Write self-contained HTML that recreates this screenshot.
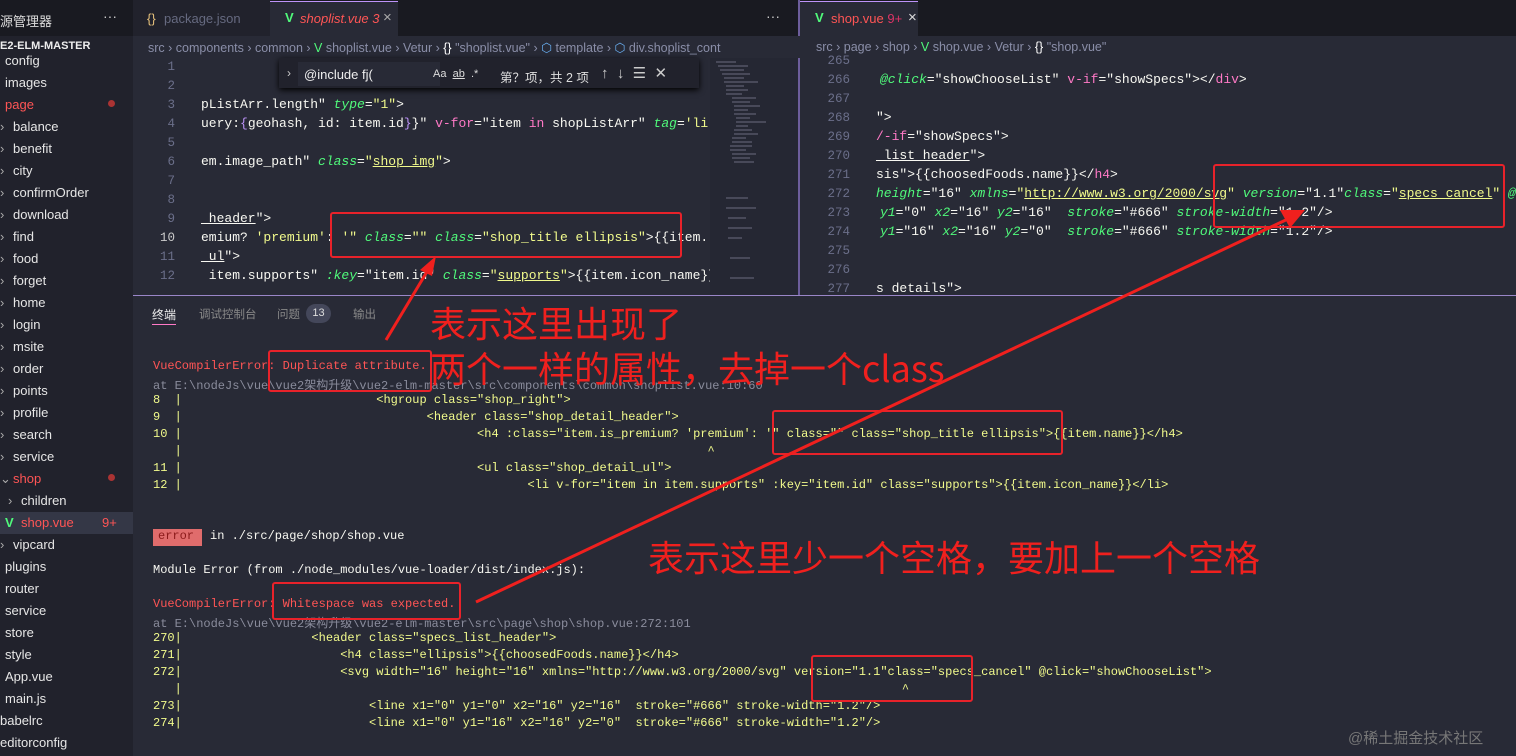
<!DOCTYPE html>
<html><head><meta charset="utf-8"><style>
*{margin:0;padding:0;box-sizing:border-box}
body{width:1516px;height:756px;overflow:hidden;background:#282a36;font-family:"Liberation Sans","Noto Sans CJK SC",sans-serif;position:relative;color:#f8f8f2}
.a{position:absolute;white-space:pre}
.sb{position:absolute;left:0;top:0;width:133px;height:756px;background:#21222c}
.si{position:absolute;font-size:13px;color:#e6e6e6;white-space:pre}
.ln{position:absolute;font-family:"Liberation Mono",monospace;font-size:12.5px;color:#6b6f8a;text-align:right;width:40px}
.cd{position:absolute;font-family:"Liberation Mono",monospace;font-size:13px;white-space:pre;color:#f8f8f2}
.g{color:#50fa7b;font-style:italic}.y{color:#f1fa8c}.p{color:#ff79c6}.pu{color:#bd93f9}
.t{position:absolute;font-family:"Liberation Mono","Noto Sans CJK SC",monospace;font-size:12px;white-space:pre;color:#f1fa8c}
.r{color:#ff5555}.gr{color:#8a8c9c}.w{color:#f8f8f2}
.box{position:absolute;border:2px solid #e8222a;border-radius:3px}
.ann{position:absolute;color:#f0201e;font-size:36px;white-space:pre;font-family:"Noto Sans CJK SC",sans-serif;line-height:44px}
</style></head><body>
<div class="a" style="left:0;top:0;width:1516px;height:36px;background:#191a21"></div>
<div class="a" style="left:133px;top:0;width:137px;height:36px;background:#21222c"></div>
<div class="a" style="left:270px;top:1px;width:128px;height:35px;background:#282a36;border-top:1px solid #bd93f9"></div>
<div class="a" style="left:800px;top:1px;width:118px;height:35px;background:#282a36;border-top:1px solid #bd93f9"></div>
<div class="a" style="left:0;top:11px;font-size:13px;color:#ddd">源管理器</div>
<div class="a" style="left:103px;top:8px;font-size:14px;color:#ccc">···</div>
<div class="a" style="left:147px;top:11px;font-size:13px;color:#e5c07b">{}</div>
<div class="a" style="left:164px;top:11px;font-size:13px;color:#666a80">package.json</div>
<div class="a" style="left:285px;top:10px;font-size:13px;color:#50fa7b;font-weight:bold">V</div>
<div class="a" style="left:300px;top:11px;font-size:13px;color:#ff5555;font-style:italic">shoplist.vue 3</div>
<div class="a" style="left:383px;top:9px;font-size:15px;color:#aaa">×</div>
<div class="a" style="left:766px;top:8px;font-size:14px;color:#ccc">···</div>
<div class="a" style="left:798px;top:0;width:2px;height:296px;background:#6d5e9c"></div>
<div class="a" style="left:815px;top:10px;font-size:13px;color:#50fa7b;font-weight:bold">V</div>
<div class="a" style="left:831px;top:11px;font-size:13px;color:#ff5555">shop.vue <span style="color:#d36">9+</span></div>
<div class="a" style="left:908px;top:9px;font-size:15px;color:#ddd">×</div>
<div class="a" style="left:133px;top:36px;width:1383px;height:22px;background:#282a36"></div>
<div class="a" style="left:148px;top:40px;font-size:12.5px;color:#8a8ea8">src › components › common › <span style="color:#50fa7b">V</span> shoplist.vue › Vetur › <span style="color:#fff">{}</span> "shoplist.vue" › <span style="color:#6ab0f3">⬡</span> template › <span style="color:#6ab0f3">⬡</span> div.shoplist_cont</div>
<div class="a" style="left:800px;top:36px;width:716px;height:22px;background:#282a36"></div>
<div class="a" style="left:816px;top:40px;font-size:12.5px;color:#8a8ea8">src › page › shop › <span style="color:#50fa7b">V</span> shop.vue › Vetur › <span style="color:#fff">{}</span> "shop.vue"</div>
<div class="sb" style="top:36px;height:720px"></div>
<div class="a" style="left:0;top:40px;font-size:11px;font-weight:bold;color:#eee">E2-ELM-MASTER</div>
<div class="a" style="left:0;top:512px;width:133px;height:22px;background:#343746"></div>
<div class="si" style="left:5px;top:53px">config</div>
<div class="si" style="left:5px;top:75px">images</div>
<div class="si" style="left:5px;top:97px;color:#ff5555">page</div>
<div class="a" style="left:108px;top:100px;width:7px;height:7px;border-radius:50%;background:#a33"></div>
<div class="si" style="left:0;top:119px;color:#aaa">›</div><div class="si" style="left:13px;top:119px">balance</div>
<div class="si" style="left:0;top:141px;color:#aaa">›</div><div class="si" style="left:13px;top:141px">benefit</div>
<div class="si" style="left:0;top:163px;color:#aaa">›</div><div class="si" style="left:13px;top:163px">city</div>
<div class="si" style="left:0;top:185px;color:#aaa">›</div><div class="si" style="left:13px;top:185px">confirmOrder</div>
<div class="si" style="left:0;top:207px;color:#aaa">›</div><div class="si" style="left:13px;top:207px">download</div>
<div class="si" style="left:0;top:229px;color:#aaa">›</div><div class="si" style="left:13px;top:229px">find</div>
<div class="si" style="left:0;top:251px;color:#aaa">›</div><div class="si" style="left:13px;top:251px">food</div>
<div class="si" style="left:0;top:273px;color:#aaa">›</div><div class="si" style="left:13px;top:273px">forget</div>
<div class="si" style="left:0;top:295px;color:#aaa">›</div><div class="si" style="left:13px;top:295px">home</div>
<div class="si" style="left:0;top:317px;color:#aaa">›</div><div class="si" style="left:13px;top:317px">login</div>
<div class="si" style="left:0;top:339px;color:#aaa">›</div><div class="si" style="left:13px;top:339px">msite</div>
<div class="si" style="left:0;top:361px;color:#aaa">›</div><div class="si" style="left:13px;top:361px">order</div>
<div class="si" style="left:0;top:383px;color:#aaa">›</div><div class="si" style="left:13px;top:383px">points</div>
<div class="si" style="left:0;top:405px;color:#aaa">›</div><div class="si" style="left:13px;top:405px">profile</div>
<div class="si" style="left:0;top:427px;color:#aaa">›</div><div class="si" style="left:13px;top:427px">search</div>
<div class="si" style="left:0;top:449px;color:#aaa">›</div><div class="si" style="left:13px;top:449px">service</div>
<div class="si" style="left:0;top:471px;color:#aaa">⌄</div><div class="si" style="left:13px;top:471px;color:#ff5555">shop</div>
<div class="a" style="left:108px;top:474px;width:7px;height:7px;border-radius:50%;background:#a33"></div>
<div class="si" style="left:8px;top:493px;color:#aaa">›</div><div class="si" style="left:21px;top:493px">children</div>
<div class="si" style="left:5px;top:515px;color:#50fa7b;font-weight:bold">V</div><div class="si" style="left:21px;top:515px;color:#ff5555">shop.vue</div><div class="si" style="left:102px;top:515px;color:#ff5555">9+</div>
<div class="si" style="left:0;top:537px;color:#aaa">›</div><div class="si" style="left:13px;top:537px">vipcard</div>
<div class="si" style="left:5px;top:559px">plugins</div>
<div class="si" style="left:5px;top:581px">router</div>
<div class="si" style="left:5px;top:603px">service</div>
<div class="si" style="left:5px;top:625px">store</div>
<div class="si" style="left:5px;top:647px">style</div>
<div class="si" style="left:5px;top:669px">App.vue</div>
<div class="si" style="left:5px;top:691px">main.js</div>
<div class="si" style="left:0;top:713px">babelrc</div>
<div class="si" style="left:0;top:735px">editorconfig</div>
<div class="ln" style="left:135px;top:60px">1</div>
<div class="ln" style="left:135px;top:79px">2</div>
<div class="ln" style="left:135px;top:98px">3</div>
<div class="ln" style="left:135px;top:117px">4</div>
<div class="ln" style="left:135px;top:136px">5</div>
<div class="ln" style="left:135px;top:155px">6</div>
<div class="ln" style="left:135px;top:174px">7</div>
<div class="ln" style="left:135px;top:193px">8</div>
<div class="ln" style="left:135px;top:212px">9</div>
<div class="ln" style="left:135px;top:231px;color:#ccc">10</div>
<div class="ln" style="left:135px;top:250px">11</div>
<div class="ln" style="left:135px;top:269px">12</div>
<div class="cd" style="left:201px;top:97px">pListArr.length" <span class="g">type</span>=<span class="y">"1"</span>&gt;</div>
<div class="cd" style="left:201px;top:116px">uery:<span class="pu">{</span>geohash, id: item.id<span class="pu">}</span>}" <span class="p">v-for</span>="item <span class="p">in</span> shopListArr" <span class="g">tag</span>=<span class="y">'li'</span></div>
<div class="cd" style="left:201px;top:154px">em.image_path" <span class="g">class</span>=<span class="y">"<u>shop_img</u>"</span>&gt;</div>
<div class="cd" style="left:201px;top:211px"><u>_header</u>"&gt;</div>
<div class="cd" style="left:201px;top:230px">emium? <span class="y">'premium'</span>: <span class="y">'"</span> <span class="g">class</span>=<span class="y">""</span> <span class="g">class</span>=<span class="y">"shop_title ellipsis"</span>&gt;{{item.</div>
<div class="cd" style="left:201px;top:249px"><u>_ul</u>"&gt;</div>
<div class="cd" style="left:201px;top:268px"> item.supports" <span class="g">:key</span>="item.id" <span class="g">class</span>=<span class="y">"<u>supports</u>"</span>&gt;{{item.icon_name}}</div>
<div class="a" style="left:279px;top:58px;width:420px;height:30px;background:#21222c;box-shadow:0 2px 6px #000"></div>
<div class="a" style="left:287px;top:66px;font-size:12px;color:#ccc">›</div>
<div class="a" style="left:298px;top:62px;width:142px;height:24px;background:#282a36"></div>
<div class="a" style="left:304px;top:67px;font-size:13px;color:#eee">@include fj(</div>
<div class="a" style="left:433px;top:68px;font-size:11px;color:#ddd">Aa  <u>ab</u>  .*</div>
<div class="a" style="left:500px;top:67px;font-size:12.5px;color:#ddd">第？项，共 2 项</div>
<div class="a" style="left:601px;top:64px;font-size:15px;color:#ccc">↑  ↓  ☰  ✕</div>
<div class="a" style="left:710px;top:58px;width:88px;height:237px;background:#252733"></div>
<svg class="a" style="left:712px;top:58px" width="86" height="237"><g stroke="#556" stroke-width="1.5"><path d="M4 4h20M6 8h30M8 12h24M10 16h28M12 20h20M12 24h34M14 28h18M14 32h22M14 36h16M20 40h24M20 44h18M22 48h26M22 52h14M22 56h22M24 60h14M24 64h30M24 68h12M22 72h18M22 76h24M20 80h14M20 84h20M18 88h22M18 92h16M20 96h24M20 100h18M22 104h20M14 140h22M14 150h30M16 160h18M16 170h24M16 180h14M18 200h20M18 220h24"/></g></svg>
<div class="ln" style="left:810px;top:54px">265</div>
<div class="ln" style="left:810px;top:73px">266</div>
<div class="ln" style="left:810px;top:92px">267</div>
<div class="ln" style="left:810px;top:111px">268</div>
<div class="ln" style="left:810px;top:130px">269</div>
<div class="ln" style="left:810px;top:149px">270</div>
<div class="ln" style="left:810px;top:168px">271</div>
<div class="ln" style="left:810px;top:187px">272</div>
<div class="ln" style="left:810px;top:206px">273</div>
<div class="ln" style="left:810px;top:225px">274</div>
<div class="ln" style="left:810px;top:244px">275</div>
<div class="ln" style="left:810px;top:263px">276</div>
<div class="ln" style="left:810px;top:282px">277</div>
<div class="cd" style="left:880px;top:72px"><span class="g">@click</span>=<span class="w">"showChooseList"</span> <span class="p">v-if</span>="showSpecs"&gt;&lt;/<span class="p">div</span>&gt;</div>
<div class="cd" style="left:876px;top:110px">"&gt;</div>
<div class="cd" style="left:876px;top:129px"><span class="p">/-if</span>="showSpecs"&gt;</div>
<div class="cd" style="left:876px;top:148px"><u>_list_header</u>"&gt;</div>
<div class="cd" style="left:876px;top:167px">sis"&gt;{{choosedFoods.name}}&lt;/<span class="p">h4</span>&gt;</div>
<div class="cd" style="left:876px;top:186px"><span class="g">height</span>="16" <span class="g">xmlns</span>=<span class="y">"<u>http://www.w3.org/2000/svg</u>"</span> <span class="g">version</span>="1.1"<span class="g">class</span>=<span class="y">"<u>specs_cancel</u>"</span> <span class="g">@cl</span></div>
<div class="cd" style="left:880px;top:205px"><span class="g">y1</span>="0" <span class="g">x2</span>="16" <span class="g">y2</span>="16"  <span class="g">stroke</span>="#666" <span class="g">stroke-width</span>="1.2"/&gt;</div>
<div class="cd" style="left:880px;top:224px"><span class="g">y1</span>="16" <span class="g">x2</span>="16" <span class="g">y2</span>="0"  <span class="g">stroke</span>="#666" <span class="g">stroke-width</span>="1.2"/&gt;</div>
<div class="cd" style="left:876px;top:281px">s details"&gt;</div>
<div class="a" style="left:133px;top:295px;width:1383px;height:1px;background:#9a86c8"></div>
<div class="a" style="left:133px;top:296px;width:1383px;height:460px;background:#282a36"></div>
<div class="a" style="left:152px;top:306px;font-size:12px;color:#eee">终端</div>
<div class="a" style="left:152px;top:324px;width:24px;height:1px;background:#ff79c6"></div>
<div class="a" style="left:199px;top:306px;font-size:11.5px;color:#888">调试控制台</div>
<div class="a" style="left:277px;top:306px;font-size:11.5px;color:#888">问题</div>
<div class="a" style="left:306px;top:304px;width:25px;height:19px;border-radius:10px;background:#44475a;font-size:11px;color:#ddd;text-align:center;line-height:19px">13</div>
<div class="a" style="left:353px;top:306px;font-size:11.5px;color:#888">输出</div>
<div class="t r" style="left:153px;top:359px">VueCompilerError: Duplicate attribute.</div>
<div class="t gr" style="left:153px;top:376px">at E:\nodeJs\vue\vue2架构升级\vue2-elm-master\src\components\common\shoplist.vue:10:60</div>
<div class="t" style="left:153px;top:393px">8  |                           &lt;hgroup class="shop_right"&gt;</div>
<div class="t" style="left:153px;top:410px">9  |                                  &lt;header class="shop_detail_header"&gt;</div>
<div class="t" style="left:153px;top:427px">10 |                                         &lt;h4 :class="item.is_premium? 'premium': '" class="" class="shop_title ellipsis"&gt;{{item.name}}&lt;/h4&gt;</div>
<div class="t" style="left:153px;top:444px">   |                                                                         ^</div>
<div class="t" style="left:153px;top:461px">11 |                                         &lt;ul class="shop_detail_ul"&gt;</div>
<div class="t" style="left:153px;top:478px">12 |                                                &lt;li v-for="item in item.supports" :key="item.id" class="supports"&gt;{{item.icon_name}}&lt;/li&gt;</div>
<div class="a" style="left:153px;top:529px;width:49px;height:17px;background:#e06c6c"></div>
<div class="t" style="left:158px;top:529px;color:#8b1a1a">error</div>
<div class="t w" style="left:210px;top:529px">in ./src/page/shop/shop.vue</div>
<div class="t w" style="left:153px;top:563px">Module Error (from ./node_modules/vue-loader/dist/index.js):</div>
<div class="t r" style="left:153px;top:597px">VueCompilerError: Whitespace was expected.</div>
<div class="t gr" style="left:153px;top:614px">at E:\nodeJs\vue\vue2架构升级\vue2-elm-master\src\page\shop\shop.vue:272:101</div>
<div class="t" style="left:153px;top:631px">270|                  &lt;header class="specs_list_header"&gt;</div>
<div class="t" style="left:153px;top:648px">271|                      &lt;h4 class="ellipsis"&gt;{{choosedFoods.name}}&lt;/h4&gt;</div>
<div class="t" style="left:153px;top:665px">272|                      &lt;svg width="16" height="16" xmlns="http://www.w3.org/2000/svg" version="1.1"class="specs_cancel" @click="showChooseList"&gt;</div>
<div class="t" style="left:153px;top:682px">   |                                                                                                    ^</div>
<div class="t" style="left:153px;top:699px">273|                          &lt;line x1="0" y1="0" x2="16" y2="16"  stroke="#666" stroke-width="1.2"/&gt;</div>
<div class="t" style="left:153px;top:716px">274|                          &lt;line x1="0" y1="16" x2="16" y2="0"  stroke="#666" stroke-width="1.2"/&gt;</div>
<div class="a" style="left:1348px;top:727px;font-size:15px;color:#777">@稀土掘金技术社区</div>
<div class="box" style="left:330px;top:212px;width:352px;height:46px"></div>
<div class="box" style="left:1213px;top:164px;width:292px;height:64px"></div>
<div class="box" style="left:268px;top:350px;width:164px;height:42px"></div>
<div class="box" style="left:772px;top:410px;width:291px;height:45px"></div>
<div class="box" style="left:272px;top:582px;width:189px;height:38px"></div>
<div class="box" style="left:811px;top:655px;width:162px;height:47px"></div>
<div class="ann" style="left:430px;top:300px">表示这里出现了</div>
<div class="ann" style="left:430px;top:345px">两个一样的属性，去掉一个class</div>
<div class="ann" style="left:648px;top:534px">表示这里少一个空格，要加上一个空格</div>
<svg class="a" style="left:0;top:0" width="1516" height="756">
<g stroke="#f0201e" stroke-width="3" fill="#f0201e">
<line x1="386" y1="340" x2="428" y2="270"/>
<polygon points="436,256 420,270 432,276" stroke="none"/>
<line x1="476" y1="602" x2="1290" y2="218"/>
<polygon points="1305,210 1280,210 1290,228" stroke="none"/>
</g></svg>
</body></html>
